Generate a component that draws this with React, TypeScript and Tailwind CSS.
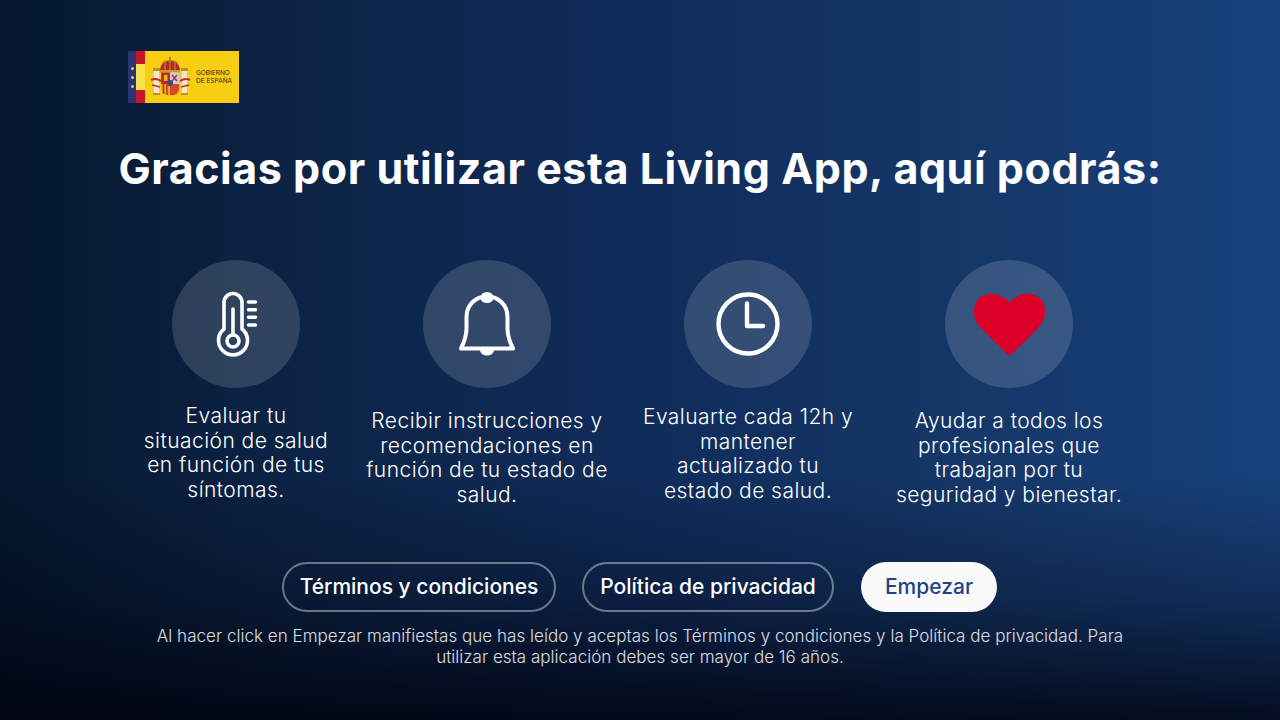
const features = [
  { lines: ["Evaluar tu", "situación de salud", "en función de tus", "síntomas."], width: "w-[200px]", textTop: "mt-[16px]", icon: "thermometer" },
  { lines: ["Recibir instrucciones y", "recomendaciones en", "función de tu estado de", "salud."], width: "w-[250px]", textTop: "mt-[21px]", icon: "bell" },
  { lines: ["Evaluarte cada 12h y", "mantener", "actualizado tu", "estado de salud."], width: "w-[212px]", textTop: "mt-[17px]", icon: "clock" },
  { lines: ["Ayudar a todos los", "profesionales que", "trabajan por tu", "seguridad y bienestar."], width: "w-[228px]", textTop: "mt-[21px]", icon: "heart" },
]

function FeatureIcon({ name }: { name: string }) {
  return (
    <div className="w-32 h-32 rounded-full bg-white/15 shrink-0">
      <svg width="128" height="128" viewBox="0 0 128 128" fill="none" stroke="#fff" strokeLinecap="round" strokeLinejoin="round">
        {name === "thermometer" && (
          <g strokeWidth="3.6" transform="translate(0.500 1)">
            <path d="M51.500 68V41.500a9 9 0 0 1 18 0V68a14.500 14.500 0 1 1-18 0Z" />
            <circle cx="60.500" cy="80" r="6" />
            <path d="M60.500 74V48" />
            <path d="M76 41h7M76 48.700h7M76 56.300h7M76 64h7" />
          </g>
        )}
        {name === "bell" && (
          <g strokeWidth="4">
            <path d="M38 88.500c3-6 5.500-12 5.500-20V57c0-12 9-20.500 20.500-20.500S84.500 45 84.500 57v11.500c0 8 2.500 14 5.500 20Z" />
            <ellipse cx="64" cy="37.500" rx="6.500" ry="5.500" fill="#fff" stroke="none" />
            <path d="M57 90a7 5.500 0 0 0 14 0Z" fill="#fff" stroke="none" />
          </g>
        )}
        {name === "clock" && (
          <g strokeWidth="4.400">
            <circle cx="64" cy="64" r="29.500" />
            <path d="M63 43.500V66H79" />
          </g>
        )}
        {name === "heart" && (
          <path
            d="M64.500 95c-1 0-2-.5-3-1.500L36 68C27 59 27 46 33 39.500c7-8 21-8.500 31.500 3C75 31 89 31.500 96 39.500c6 6.500 6 19.500-3 28.500L67.500 93.500c-1 1-2 1.500-3 1.500Z"
            fill="#dc0028"
            stroke="none"
          />
        )}
      </svg>
    </div>
  )
}

function GovLogo() {
  return (
    <div className="flex w-[111px] h-[52px] bg-[#f8ce13]">
      <div className="w-[8px] bg-[#2b3472] flex flex-col items-center justify-center gap-[6px] pl-[1px]">
        <span className="w-[3px] h-[3px] rounded-full bg-[#d9c85a]" />
        <span className="w-[3px] h-[3px] rounded-full bg-[#d9c85a]" />
        <span className="w-[3px] h-[3px] rounded-full bg-[#d9c85a]" />
      </div>
      <div className="w-[9px] flex flex-col">
        <div className="h-[13px] bg-[#c4172c]" />
        <div className="flex-1 bg-[#fbe54a]" />
        <div className="h-[13px] bg-[#c4172c]" />
      </div>
      <svg width="46" height="52" viewBox="0 0 46 52" className="shrink-0">
        {/* escudo */}
        <path d="M15 20c0-7 5-11 10-11s10 4 10 11Z" fill="#b3262c" />
        <path d="M25 6v4" stroke="#8a6d1d" strokeWidth="1.500" />
        <path d="M16 12c3-3 15-3 18 0M20 9v10M30 9v10M25 9v10" stroke="#c99b1f" strokeWidth="1" fill="none" />
        <rect x="15" y="19" width="20" height="2.500" fill="#c99b1f" />
        <rect x="9" y="20" width="5" height="23" fill="#efe7d0" />
        <rect x="37" y="20" width="5" height="23" fill="#efe7d0" />
        <rect x="8" y="17" width="7" height="3" fill="#b99326" />
        <rect x="36" y="17" width="7" height="3" fill="#b99326" />
        <rect x="8" y="42" width="7" height="2" fill="#b99326" />
        <rect x="36" y="42" width="7" height="2" fill="#b99326" />
        <path d="M16 21.500h9V33h-9Z" fill="#c8282d" />
        <rect x="19" y="24" width="3.500" height="6" fill="#e6b422" />
        <path d="M25 21.500h9V33h-9Z" fill="#cfc9d2" />
        <path d="M27 24l5 6M32 24l-5 6" stroke="#9a3d55" strokeWidth="1.500" />
        <path d="M16 33h9v11c-5 1-9-2-9-6Z" fill="#dca522" />
        <path d="M18.500 33v10M22 33v11" stroke="#c8282d" strokeWidth="1.300" />
        <path d="M25 33h9v5c0 4-4 7-9 6Z" fill="#d9482a" />
        <circle cx="25" cy="32" r="3" fill="#3c4a7a" />
        <path d="M6 29c4-2 7-1 10 1M45 29c-4-2-7-1-10 1" stroke="#c8282d" strokeWidth="2" fill="none" />
        <path d="M7 34l8 2M44 34l-8 2" stroke="#c8282d" strokeWidth="1.500" fill="none" />
      </svg>
      <div className="ml-[5px] self-center text-[6.500px] leading-[8px] text-[#2a2a1c] font-normal whitespace-nowrap">
        <div>GOBIERNO</div>
        <div>DE ESPAÑA</div>
      </div>
    </div>
  )
}

export default function App() {
  return (
    <main className="relative w-[1280px] h-[720px] overflow-hidden font-['Inter',sans-serif] text-white bg-[linear-gradient(90deg,#05172f_0%,#0c2345_22%,#102c5a_50%,#15386a_78%,#18417c_100%)]">
      <div className="absolute inset-0 bg-[linear-gradient(180deg,rgba(0,0,10,0)_0%,rgba(0,0,10,0)_66%,rgba(0,0,10,0.3)_83%,rgba(0,0,10,0.8)_100%)]" />

      <div className="relative">
        <div className="pl-[128px] pt-[51px]">
          <GovLogo />
        </div>

        <h1 className="mt-[39px] text-center text-[43px] leading-[52px] font-bold tracking-[0.55px] whitespace-nowrap">
          Gracias por utilizar esta Living App, aquí podrás:
        </h1>

        <section className="mt-[66px] ml-[136px] flex items-start">
          {features.map((f, i) => (
            <div
              key={f.icon}
              className={`${f.width} ${i === 1 ? "ml-[26px]" : i === 2 ? "ml-[30px]" : i === 3 ? "ml-[41px]" : ""} flex flex-col items-center`}
            >
              <FeatureIcon name={f.icon} />
              <div className={`${f.textTop} text-center text-[21px] leading-[24.700px] font-light tracking-[0.45px] whitespace-nowrap`}>
                {f.lines.map((l) => (
                  <div key={l}>{l}</div>
                ))}
              </div>
            </div>
          ))}
        </section>

        <div className="absolute top-[562px] left-0 w-full flex flex-col items-center">
          <div className="flex items-center mr-[1px]">
            <button className="w-[274px] h-[50px] rounded-[25px] border-2 border-white/40 text-[21px] font-medium">
              Términos y condiciones
            </button>
            <button className="ml-[26px] w-[252px] h-[50px] rounded-[25px] border-2 border-white/40 text-[21px] font-medium">
              Política de privacidad
            </button>
            <button className="ml-[27px] w-[136px] h-[50px] rounded-[25px] bg-[#fafafa] text-[#1f4483] text-[21px] font-medium">
              Empezar
            </button>
          </div>
          <p className="mt-[14px] text-center text-[17px] leading-[21px] font-light tracking-[0.03px] text-white/85 whitespace-nowrap">
            Al hacer click en Empezar manifiestas que has leído y aceptas los Términos y condiciones y la Política de privacidad. Para
            <br />
            utilizar esta aplicación debes ser mayor de 16 años.
          </p>
        </div>
      </div>
    </main>
  )
}
